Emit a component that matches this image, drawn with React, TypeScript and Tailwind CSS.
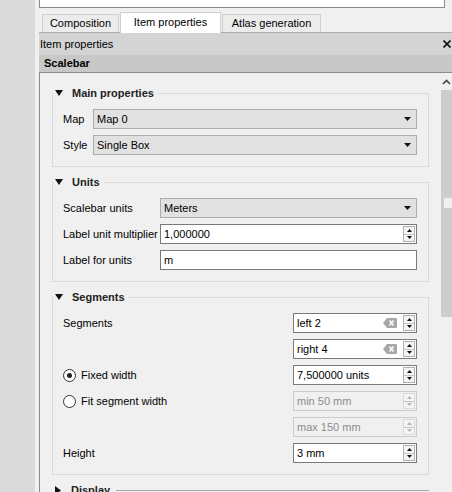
import React from 'react';

const font = "font-['Liberation_Sans',Arial,sans-serif]";

function DownTri({ className = '' }: { className?: string }) {
  return (
    <svg width="8" height="6" viewBox="0 0 8 6" className={className}>
      <polygon points="0,0 8,0 4,6" fill="#111" />
    </svg>
  );
}

function RightTri() {
  return (
    <svg width="6" height="9" viewBox="0 0 6 9">
      <polygon points="0,0 6,4.5 0,9" fill="#111" />
    </svg>
  );
}

function Combo({ text }: { text: string }) {
  return (
    <div className="h-[20px] flex items-center bg-[#e1e1e1] border border-[#adadad] pl-[3px] pr-[5px]">
      <span className="flex-1">{text}</span>
      <svg width="7" height="4" viewBox="0 0 7 4">
        <polygon points="0,0 7,0 3.5,4" fill="#111" />
      </svg>
    </div>
  );
}

function SpinButtons({ disabled }: { disabled?: boolean }) {
  const c = disabled ? '#b5b5b5' : '#111';
  return (
    <div
      className={`w-[12px] h-[16px] flex flex-col border ${
        disabled ? 'border-[#dadada]' : 'border-[#b0b0b0]'
      } bg-[#f4f4f4]`}
    >
      <div className="flex-1 flex items-center justify-center border-b border-[#c4c4c4]">
        <svg width="5" height="3" viewBox="0 0 5 3">
          <polygon points="0,3 5,3 2.5,0" fill={c} />
        </svg>
      </div>
      <div className="flex-1 flex items-center justify-center">
        <svg width="5" height="3" viewBox="0 0 5 3">
          <polygon points="0,0 5,0 2.5,3" fill={c} />
        </svg>
      </div>
    </div>
  );
}

function ClearIcon() {
  return (
    <svg width="14" height="10" viewBox="0 0 14 10" className="mr-[6px]">
      <path d="M4 0 H13 Q14 0 14 1 V9 Q14 10 13 10 H4 L0 5 Z" fill="#a8a8a8" />
      <path d="M6.5 2.5 L10.5 7.5 M10.5 2.5 L6.5 7.5" stroke="#fff" strokeWidth="1.4" />
    </svg>
  );
}

function Spin({ value, disabled, clear }: { value: string; disabled?: boolean; clear?: boolean }) {
  return (
    <div
      className={`h-[20px] flex items-center border pl-[3px] pr-[1px] ${
        disabled ? 'bg-[#f0f0f0] border-[#cccccc] text-[#8c8c8c]' : 'bg-white border-[#7a7a7a]'
      }`}
    >
      <span className="flex-1 whitespace-nowrap">{value}</span>
      {clear && <ClearIcon />}
      <SpinButtons disabled={disabled} />
    </div>
  );
}

function LineEdit({ value }: { value: string }) {
  return (
    <div className="h-[20px] flex items-center bg-white border border-[#7a7a7a] pl-[3px]">
      {value}
    </div>
  );
}

function Radio({ checked, label }: { checked?: boolean; label: string }) {
  return (
    <div className="flex items-center gap-[5px]">
      <div className="w-[13px] h-[13px] rounded-full border border-[#333] bg-white flex items-center justify-center">
        {checked && <div className="w-[5px] h-[5px] rounded-full bg-[#222]" />}
      </div>
      <span>{label}</span>
    </div>
  );
}

function Group({
  title,
  children,
  first,
}: {
  title: string;
  children: React.ReactNode;
  first?: boolean;
}) {
  return (
    <div className={`${first ? 'mt-[20px]' : 'mt-[15px]'} border border-[#d9d9d9]`}>
      <div className="-mt-[8px] h-[14px] flex items-center w-fit bg-[#f0f0f0] pl-[2px] pr-[4px] gap-[9px]">
        <DownTri />
        <span className="font-bold text-[#222]">{title}</span>
      </div>
      <div className="pt-[9px] pb-[11px] pl-[10px] pr-[11px]">{children}</div>
    </div>
  );
}

export default function App() {
  return (
    <div className={`w-[452px] h-[492px] overflow-hidden flex bg-[#f0f0f0] text-[11px] text-black ${font}`}>
      <div className="w-[35px] bg-[#dadada] shrink-0" />
      <div className="flex-1 flex flex-col pl-[4px] min-w-0">
        {/* top box */}
        <div className="h-[8px] mr-[7px] bg-white border-x border-b border-[#8a8a8a]" />

        {/* tabs */}
        <div className="mt-[4px] h-[21px] border-b border-[#adadad] flex items-end pl-[3px] gap-[1px]">
          <div className="h-[18px] w-[77px] border-x border-t border-[#d0d0d0] bg-[#ececec] flex items-center justify-center">
            Composition
          </div>
          <div className="h-[21px] -mb-px w-[101px] border-x border-t border-[#d0d0d0] bg-white flex items-center justify-center pb-[2px]">
            Item properties
          </div>
          <div className="h-[18px] w-[99px] border-x border-t border-[#d0d0d0] bg-[#ececec] flex items-center justify-center">
            Atlas generation
          </div>
        </div>

        {/* dock title */}
        <div className="h-[22px] bg-[#d4d4d4] flex items-center pl-[1px] pr-[1px]">
          <span className="flex-1">Item properties</span>
          <svg width="8" height="8" viewBox="0 0 8 8">
            <path d="M0.5 0.5 L7.5 7.5 M7.5 0.5 L0.5 7.5" stroke="#111" strokeWidth="1.6" />
          </svg>
        </div>
        <div className="h-[17px] bg-[#c8c8c8] flex items-center pl-[5px] font-bold">Scalebar</div>

        {/* scroll area */}
        <div className="flex-1 flex border-t border-l border-[#8a8a8a] min-h-0">
          <div className="flex-1 pl-[12px] pr-[12px] min-w-0">
            <Group title="Main properties" first>
              <div className="grid grid-cols-[30px_1fr] gap-y-[6px] items-center">
                <span>Map</span>
                <Combo text="Map 0" />
                <span>Style</span>
                <Combo text="Single Box" />
              </div>
            </Group>

            <Group title="Units">
              <div className="grid grid-cols-[97px_1fr] gap-y-[6px] items-center">
                <span>Scalebar units</span>
                <Combo text="Meters" />
                <span>Label unit multiplier</span>
                <Spin value="1,000000" />
                <span>Label for units</span>
                <LineEdit value="m" />
              </div>
            </Group>

            <Group title="Segments">
              <div className="grid grid-cols-[230px_1fr] gap-y-[6px] items-center">
                <span>Segments</span>
                <Spin value="left 2" clear />
                <span />
                <Spin value="right 4" clear />
                <Radio checked label="Fixed width" />
                <Spin value="7,500000 units" />
                <Radio label="Fit segment width" />
                <Spin value="min 50 mm" disabled />
                <span />
                <Spin value="max 150 mm" disabled />
                <span>Height</span>
                <Spin value="3 mm" />
              </div>
            </Group>

            <div className="mt-[15px] border-t border-[#a8a8a8]">
              <div className="-mt-[8px] h-[14px] flex items-center w-fit bg-[#f0f0f0] pl-[3px] pr-[6px] gap-[10px]">
                <RightTri />
                <span className="font-bold text-[#222]">Display</span>
              </div>
            </div>
          </div>

          {/* scrollbar */}
          <div className="w-[11px] shrink-0 flex flex-col">
            <div className="h-[17px] flex items-center justify-center">
              <svg width="9" height="6" viewBox="0 0 9 6">
                <path d="M1 5 L4.5 1.5 L8 5" stroke="#444" strokeWidth="1.6" fill="none" />
              </svg>
            </div>
            <div className="h-[227px] bg-[#cdcdcd] flex flex-col">
              <div className="h-[108px]" />
              <div className="h-[10px] ml-[3px] bg-[#f0f0f0]" />
            </div>
          </div>
        </div>
      </div>
    </div>
  );
}
